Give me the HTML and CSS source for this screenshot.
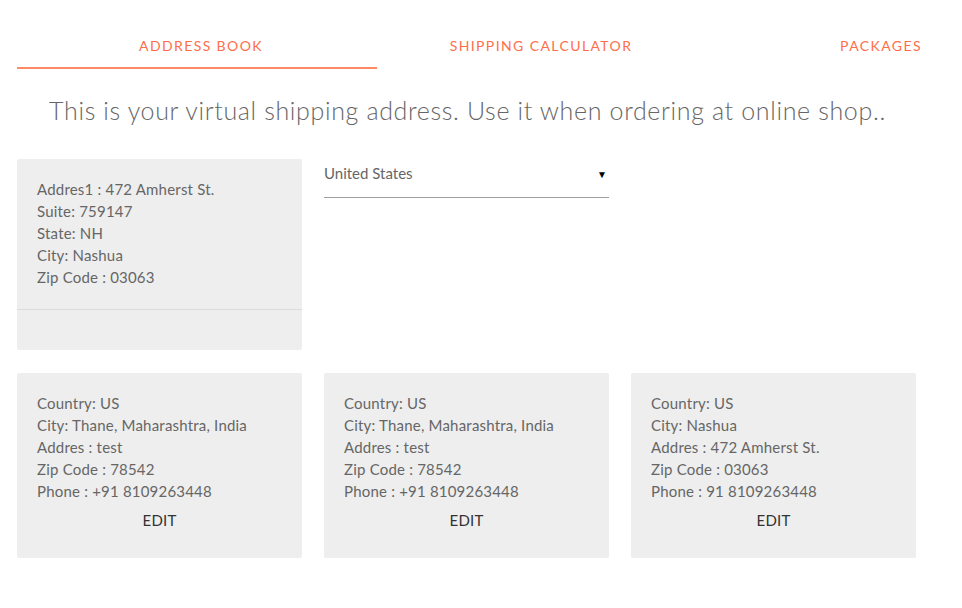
FILE: index.html
```html
<!DOCTYPE html>
<html>
<head>
<meta charset="utf-8">
<link rel="stylesheet" href="styles.css">
</head>
<body>
<div class="page">
  <nav class="tabs">
    <div class="tab">ADDRESS BOOK</div>
    <div class="tab">SHIPPING CALCULATOR</div>
    <div class="tab">PACKAGES</div>
  </nav>
  <div class="indicator"></div>
  <h1 class="intro">This is your virtual shipping address. Use it when ordering at online shop..</h1>
  <div class="grid">
    <div class="card virtual">
      <div class="card-body">
        <div>Addres1 : 472 Amherst St.</div>
        <div>Suite: 759147</div>
        <div>State: NH</div>
        <div>City: Nashua</div>
        <div>Zip Code : 03063</div>
      </div>
      <div class="card-foot"></div>
    </div>
    <div class="select">
      <span>United States</span>
      <span class="arrow">&#9660;</span>
    </div>
  </div>
  <div class="grid">
    <div class="card addr">
      <div>Country: US</div>
      <div>City: Thane, Maharashtra, India</div>
      <div>Addres : test</div>
      <div>Zip Code : 78542</div>
      <div>Phone : +91 8109263448</div>
      <div class="edit">EDIT</div>
    </div>
    <div class="card addr">
      <div>Country: US</div>
      <div>City: Thane, Maharashtra, India</div>
      <div>Addres : test</div>
      <div>Zip Code : 78542</div>
      <div>Phone : +91 8109263448</div>
      <div class="edit">EDIT</div>
    </div>
    <div class="card addr">
      <div>Country: US</div>
      <div>City: Nashua</div>
      <div>Addres : 472 Amherst St.</div>
      <div>Zip Code : 03063</div>
      <div>Phone : 91 8109263448</div>
      <div class="edit">EDIT</div>
    </div>
  </div>
</div>
</body>
</html>
```
FILE: styles.css
```css
* { box-sizing: border-box; }
body {
  margin: 0;
  background: #fff;
  font-family: "Lato", "Open Sans", sans-serif;
  color: #666;
  overflow: hidden;
}
.page {
  padding: 0 17px;
  width: 962px;
}
.tabs {
  display: flex;
  padding: 36px 0 11px 14px;
  overflow: hidden;
}
.tab {
  flex: 0 0 340px;
  text-align: center;
  font-size: 14px;
  line-height: 20px;
  letter-spacing: 1.4px;
  color: #ff6e4a;
}
.indicator {
  width: 360px;
  height: 2px;
  background: #ff8a65;
}
.intro {
  margin: 26px 0 34px;
  padding-right: 27px;
  text-align: center;
  font-size: 25px;
  line-height: 30px;
  font-weight: 300;
  letter-spacing: 0.65px;
  color: #666;
}
.grid {
  display: flex;
  gap: 22px;
  margin-bottom: 23px;
}
.card {
  width: 285px;
  background: #eeeeee;
  border-radius: 2px;
  font-size: 15px;
  line-height: 22px;
  letter-spacing: 0.2px;
}
.card-body {
  padding: 19px 20px 21px;
}
.card-foot {
  border-top: 1px solid #dcdcdc;
  height: 41px;
}
.select {
  width: 285px;
  height: 39px;
  display: flex;
  justify-content: space-between;
  align-items: flex-start;
  align-self: flex-start;
  padding-top: 4px;
  line-height: 20px;
  border-bottom: 1px solid #9e9e9e;
  font-size: 15px;
  color: #666;
}
.arrow {
  font-size: 10px;
  color: #000;
  margin-right: 2px;
  margin-top: 1px;
}
.addr {
  padding: 19px 20px 27px;
}
.edit {
  margin-top: 7px;
  text-align: center;
  color: #333;
}
```
